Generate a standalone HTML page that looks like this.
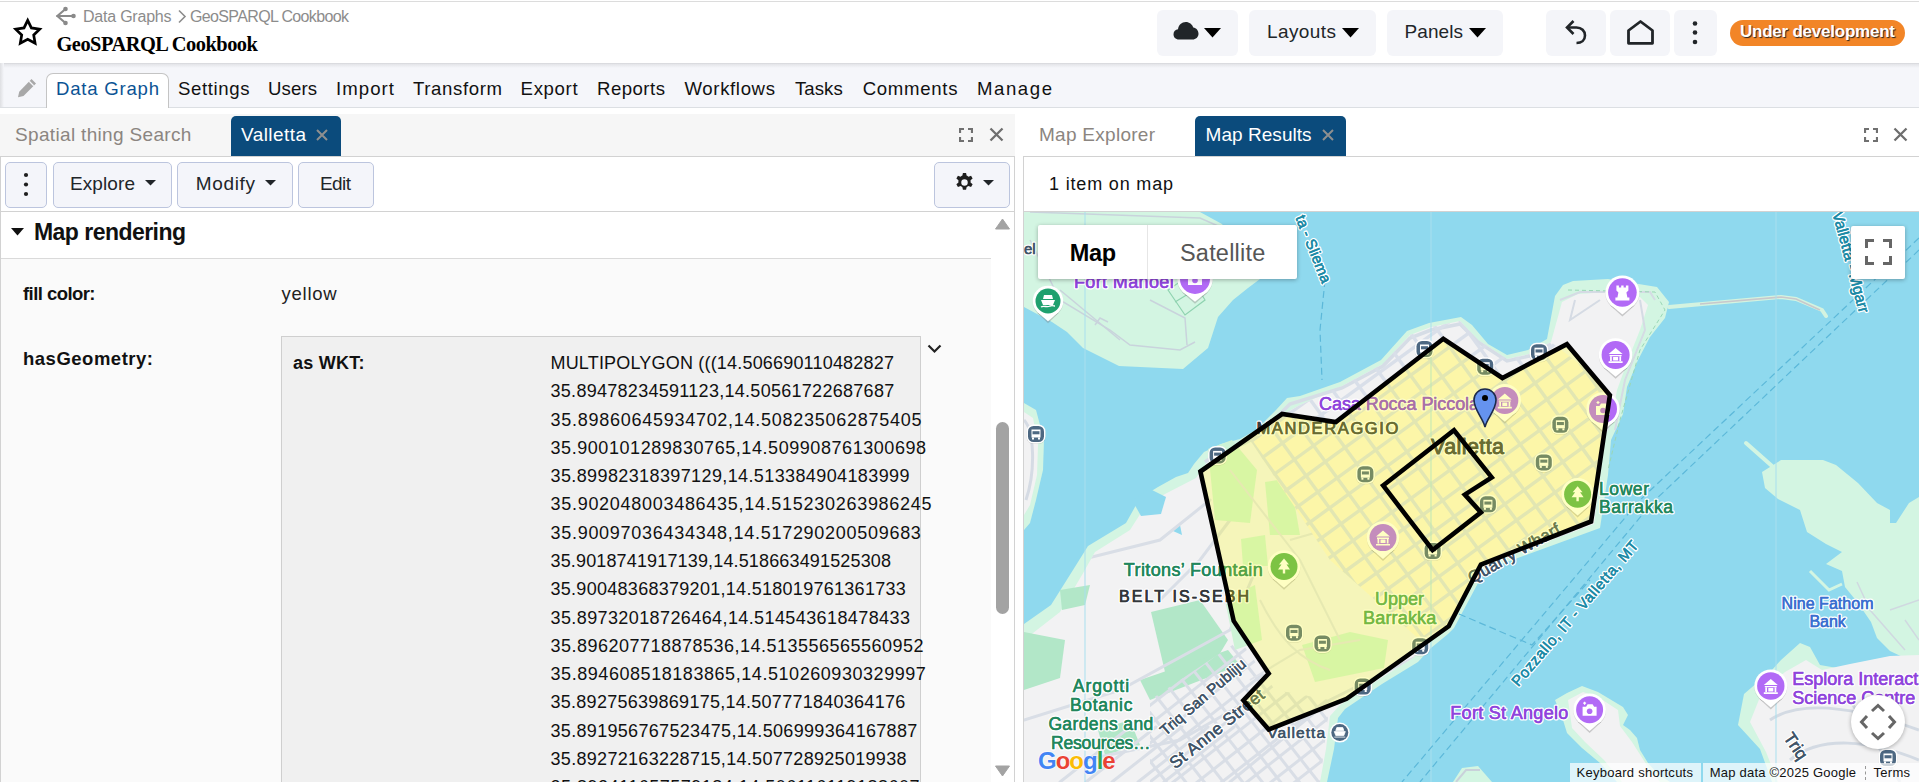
<!DOCTYPE html>
<html><head><meta charset="utf-8">
<style>
*{margin:0;padding:0;box-sizing:border-box}
html,body{width:1919px;height:782px;overflow:hidden;background:#fff;font-family:"Liberation Sans",sans-serif;color:#1a1a1a}
.a{position:absolute}
.t{position:absolute;white-space:nowrap;line-height:1}
.btn{position:absolute;background:#f4f5f9;border-radius:6px}
.tb{position:absolute;background:#f4f5fa;border:1px solid #bcc5de;border-radius:5px}
</style></head><body>
<div class="a" style="left:0;top:1px;width:1919px;height:1px;background:#dcdcdc"></div><div class="a" style="left:0;top:63px;width:1919px;height:44px;background:#f5f6fa"></div><div class="a" style="left:0;top:63px;width:1919px;height:1px;background:#dadbdf"></div><div class="a" style="left:0;top:64px;width:1919px;height:4px;background:linear-gradient(#e3e4e8,#f5f6fa)"></div><div class="a" style="left:0;top:63px;width:4px;height:44px;background:linear-gradient(90deg,#dedfe2,#f5f6fa)"></div><div class="a" style="left:0;top:107px;width:1919px;height:1px;background:#dcdfe3"></div><svg class="a" style="left:0;top:0" width="60" height="60"><path d="M27.70 20.40 L31.40 27.90 L39.68 29.11 L33.69 34.95 L35.11 43.19 L27.70 39.30 L20.29 43.19 L21.71 34.95 L15.72 29.11 L24.00 27.90 Z" fill="none" stroke="#000" stroke-width="2.7" stroke-linejoin="miter"/></svg><svg class="a" style="left:55px;top:6px" width="22" height="20" viewBox="0 0 22 20"><g fill="#8a8a8a" stroke="#8a8a8a"><circle cx="10.5" cy="3" r="2.3" stroke="none"/><circle cx="10.5" cy="17" r="2.3" stroke="none"/><circle cx="18.5" cy="10" r="2.3" stroke="none"/><path d="M2 10 L18 10 M2.3 10 L10.5 3 M2.3 10 L10.5 17" stroke-width="2.2" fill="none" stroke-linecap="round"/></g></svg><div class="t" style="left:83.0px;top:9.00px;font-size:16px;letter-spacing:-0.221px;color:#8c8c8c;">Data Graphs</div>
<svg class="a" style="left:177px;top:9px" width="10" height="15" viewBox="0 0 10 15"><path d="M2 1.5 L8 7.5 L2 13.5" fill="none" stroke="#8c8c8c" stroke-width="1.6"/></svg><div class="t" style="left:190.0px;top:9.00px;font-size:16px;letter-spacing:-0.639px;color:#8c8c8c;">GeoSPARQL Cookbook</div>
<div class="t" style="left:56.5px;top:34.00px;font-size:20.4px;letter-spacing:-0.494px;color:#000;font-weight:bold;font-family:'Liberation Serif',serif;">GeoSPARQL Cookbook</div>
<div class="btn" style="left:1157px;top:10px;width:81px;height:46px"></div><svg class="a" style="left:1173px;top:21px" width="26" height="19" viewBox="0 0 26 19"><path d="M6 18.5 C2.5 18.5 0.5 16 0.5 13.2 C0.5 10.5 2.5 8.5 5 8.2 C5.5 4 8.8 1 12.8 1 C16.3 1 19.3 3.3 20.3 6.6 C23.3 7 25.5 9.6 25.5 12.7 C25.5 16 22.8 18.5 19.6 18.5 Z" fill="#212529"/></svg><svg class="a" style="left:1204px;top:28px" width="17" height="10" viewBox="0 0 17 10"><path d="M0 0 L17 0 L8.5 9.5 Z" fill="#000"/></svg><div class="btn" style="left:1249px;top:10px;width:127px;height:46px"></div><div class="t" style="left:1267.0px;top:22.00px;font-size:19px;letter-spacing:0.409px;color:#212529;">Layouts</div>
<svg class="a" style="left:1342px;top:28px" width="17" height="10" viewBox="0 0 17 10"><path d="M0 0 L17 0 L8.5 9.5 Z" fill="#000"/></svg><div class="btn" style="left:1387px;top:10px;width:116px;height:46px"></div><div class="t" style="left:1404.5px;top:22.00px;font-size:19px;letter-spacing:0.081px;color:#212529;">Panels</div>
<svg class="a" style="left:1469px;top:28px" width="17" height="10" viewBox="0 0 17 10"><path d="M0 0 L17 0 L8.5 9.5 Z" fill="#000"/></svg><div class="btn" style="left:1546px;top:10px;width:60px;height:46px"></div><div class="btn" style="left:1610px;top:10px;width:60px;height:46px"></div><div class="btn" style="left:1674px;top:10px;width:43px;height:46px"></div><svg class="a" style="left:1563px;top:18px" width="26" height="27" viewBox="0 0 26 27"><path d="M5 9.5 L13.5 9.5 C18.5 9.5 22 13 22 17.5 C22 22 18.5 25 13.5 25" fill="none" stroke="#212529" stroke-width="2.6"/><path d="M10.5 3 L4 9.5 L10.5 16" fill="none" stroke="#212529" stroke-width="2.6"/></svg><svg class="a" style="left:1626px;top:19px" width="29" height="27" viewBox="0 0 29 27"><path d="M2.5 11.5 L14.5 2.5 L26.5 11.5 L26.5 24.3 L2.5 24.3 Z" fill="none" stroke="#212529" stroke-width="2.8" stroke-linejoin="round"/></svg><svg class="a" style="left:1690px;top:19px" width="10" height="27" viewBox="0 0 10 27"><circle cx="5" cy="4.5" r="2.3" fill="#212529"/><circle cx="5" cy="13.5" r="2.3" fill="#212529"/><circle cx="5" cy="23" r="2.3" fill="#212529"/></svg><div class="a" style="left:1730px;top:20px;width:175px;height:26px;background:#f28527;border-radius:13px"></div><div class="t" style="left:1740.0px;top:23.00px;font-size:17px;letter-spacing:-0.231px;color:#fff;font-weight:bold;text-shadow:1px 1px 1px #222;">Under development</div>
<svg class="a" style="left:16px;top:77px" width="22" height="22" viewBox="0 0 22 22"><path d="M15.5 2 L20 6.5 L7.5 19 L2 20.2 L3.2 14.7 Z" fill="#a8a8a8"/><path d="M13.2 4.3 L17.7 8.8" stroke="#f5f6fa" stroke-width="1.3"/></svg><div class="a" style="left:46px;top:73px;width:123px;height:35px;background:#fff;border:1px solid #c4c4c4;border-bottom:none;border-radius:7px 7px 0 0"></div><div class="t" style="left:56.0px;top:80.00px;font-size:18.6px;letter-spacing:0.761px;color:#0b5394;">Data Graph</div>
<div class="t" style="left:178.0px;top:80.00px;font-size:18.6px;letter-spacing:0.613px;color:#111;">Settings</div>
<div class="t" style="left:268.0px;top:80.00px;font-size:18.6px;letter-spacing:0.107px;color:#111;">Users</div>
<div class="t" style="left:336.0px;top:80.00px;font-size:18.6px;letter-spacing:1.057px;color:#111;">Import</div>
<div class="t" style="left:413.0px;top:80.00px;font-size:18.6px;letter-spacing:0.618px;color:#111;">Transform</div>
<div class="t" style="left:520.6px;top:80.00px;font-size:18.6px;letter-spacing:0.648px;color:#111;">Export</div>
<div class="t" style="left:597.0px;top:80.00px;font-size:18.6px;letter-spacing:0.478px;color:#111;">Reports</div>
<div class="t" style="left:684.5px;top:80.00px;font-size:18.6px;letter-spacing:0.633px;color:#111;">Workflows</div>
<div class="t" style="left:795.0px;top:80.00px;font-size:18.6px;letter-spacing:0.039px;color:#111;">Tasks</div>
<div class="t" style="left:862.7px;top:80.00px;font-size:18.6px;letter-spacing:0.697px;color:#111;">Comments</div>
<div class="t" style="left:977.0px;top:80.00px;font-size:18.6px;letter-spacing:1.556px;color:#111;">Manage</div>
<div class="a" style="left:0;top:114px;width:1015px;height:42px;background:#f6f6f6"></div><div class="a" style="left:0;top:156px;width:1015px;height:1px;background:#d2d2d2"></div><div class="a" style="left:0;top:157px;width:1px;height:625px;background:#d2d2d2"></div><div class="a" style="left:1014px;top:157px;width:1px;height:625px;background:#d2d2d2"></div><div class="a" style="left:1px;top:211px;width:1013px;height:1px;background:#d2d2d2"></div><div class="a" style="left:1px;top:258px;width:990px;height:1px;background:#dadada"></div><div class="a" style="left:1px;top:259px;width:990px;height:523px;background:#fafafa"></div><div class="t" style="left:15.0px;top:125.00px;font-size:19px;letter-spacing:0.334px;color:#8b8580;">Spatial thing Search</div>
<div class="a" style="left:231px;top:116px;width:110px;height:40px;background:#0b4b7c;border-radius:5px 5px 0 0"></div><div class="t" style="left:241.0px;top:125.00px;font-size:19px;letter-spacing:0.434px;color:#fff;">Valletta</div>
<svg class="a" style="left:315.5px;top:128.5px" width="12" height="12" viewBox="0 0 12 12"><path d="M1 1 L11 11 M11 1 L1 11" stroke="#8f8f8f" stroke-width="2"/></svg><svg class="a" style="left:959px;top:128px" width="14" height="14" viewBox="0 0 14 14"><path d="M1 5 V1 H5 M9 1 H13 V5 M13 9 V13 H9 M5 13 H1 V9" fill="none" stroke="#707070" stroke-width="2.2"/></svg><svg class="a" style="left:989px;top:127px" width="15" height="15" viewBox="0 0 15 15"><path d="M1.5 1.5 L13.5 13.5 M13.5 1.5 L1.5 13.5" stroke="#6e6e6e" stroke-width="2.3"/></svg><div class="tb" style="left:5px;top:162px;width:42px;height:46px"></div><div class="tb" style="left:53px;top:162px;width:119px;height:46px"></div><div class="tb" style="left:177px;top:162px;width:116px;height:46px"></div><div class="tb" style="left:298px;top:162px;width:76px;height:46px"></div><div class="tb" style="left:934px;top:162px;width:76px;height:46px"></div><svg class="a" style="left:21px;top:171px" width="10" height="27" viewBox="0 0 10 27"><circle cx="5" cy="4" r="2.1" fill="#1e1e1e"/><circle cx="5" cy="13.5" r="2.1" fill="#1e1e1e"/><circle cx="5" cy="23" r="2.1" fill="#1e1e1e"/></svg><div class="t" style="left:70.0px;top:174.00px;font-size:19px;letter-spacing:0.096px;color:#212529;">Explore</div>
<svg class="a" style="left:144.5px;top:180px" width="11" height="6" viewBox="0 0 11 6"><path d="M0 0 L11 0 L5.5 5.5 Z" fill="#212529"/></svg><div class="t" style="left:195.7px;top:174.00px;font-size:19px;letter-spacing:0.668px;color:#212529;">Modify</div>
<svg class="a" style="left:264.5px;top:180px" width="11" height="6" viewBox="0 0 11 6"><path d="M0 0 L11 0 L5.5 5.5 Z" fill="#212529"/></svg><div class="t" style="left:320.0px;top:174.00px;font-size:19px;letter-spacing:-0.580px;color:#212529;">Edit</div>
<svg class="a" style="left:954px;top:172px" width="21" height="21" viewBox="0 0 24 24"><path fill="#1e1e1e" fill-rule="evenodd" d="M10.2 1h3.6l.6 3.1a8 8 0 0 1 2.1 1.2l3-1 1.8 3.1-2.4 2.1a8 8 0 0 1 0 2.4l2.4 2.1-1.8 3.1-3-1a8 8 0 0 1-2.1 1.2l-.6 3.1h-3.6l-.6-3.1a8 8 0 0 1-2.1-1.2l-3 1-1.8-3.1 2.4-2.1a8 8 0 0 1 0-2.4L2.7 7.4l1.8-3.1 3 1a8 8 0 0 1 2.1-1.2zM12 8.3a3.7 3.7 0 1 0 0 7.4 3.7 3.7 0 0 0 0-7.4z"/></svg><svg class="a" style="left:982.5px;top:180px" width="11" height="6" viewBox="0 0 11 6"><path d="M0 0 L11 0 L5.5 5.5 Z" fill="#212529"/></svg><svg class="a" style="left:11px;top:228px" width="14" height="8" viewBox="0 0 14 8"><path d="M0 0 L13 0 L6.5 7.5 Z" fill="#111"/></svg><div class="t" style="left:34.0px;top:221.00px;font-size:23px;letter-spacing:-0.539px;color:#111;font-weight:bold;">Map rendering</div>
<div class="t" style="left:23.0px;top:285.00px;font-size:18.5px;letter-spacing:-0.561px;color:#111;font-weight:bold;">fill color:</div>
<div class="t" style="left:281.5px;top:285.00px;font-size:18.5px;letter-spacing:0.758px;color:#222;">yellow</div>
<div class="t" style="left:23.0px;top:350.00px;font-size:18.5px;letter-spacing:0.508px;color:#111;font-weight:bold;">hasGeometry:</div>
<div class="a" style="left:281px;top:336px;width:640px;height:450px;background:#f0f0f0;border:1px solid #cfcfcf"></div><div class="t" style="left:293.0px;top:354.00px;font-size:18px;letter-spacing:0.249px;color:#111;font-weight:bold;">as WKT:</div>
<div class="t" style="left:550.5px;top:354.00px;font-size:18px;letter-spacing:0.188px;color:#111;">MULTIPOLYGON (((14.506690110482827</div>
<div class="t" style="left:550.5px;top:382.00px;font-size:18px;letter-spacing:0.285px;color:#111;">35.89478234591123,14.50561722687687</div>
<div class="t" style="left:550.5px;top:411.00px;font-size:18px;letter-spacing:0.732px;color:#111;">35.89860645934702,14.508235062875405</div>
<div class="t" style="left:550.5px;top:439.00px;font-size:18px;letter-spacing:0.562px;color:#111;">35.900101289830765,14.509908761300698</div>
<div class="t" style="left:550.5px;top:467.00px;font-size:18px;letter-spacing:0.389px;color:#111;">35.89982318397129,14.513384904183999</div>
<div class="t" style="left:550.5px;top:495.00px;font-size:18px;letter-spacing:0.712px;color:#111;">35.902048003486435,14.515230263986245</div>
<div class="t" style="left:550.5px;top:524.00px;font-size:18px;letter-spacing:0.715px;color:#111;">35.90097036434348,14.517290200509683</div>
<div class="t" style="left:550.5px;top:552.00px;font-size:18px;letter-spacing:0.151px;color:#111;">35.9018741917139,14.518663491525308</div>
<div class="t" style="left:550.5px;top:580.00px;font-size:18px;letter-spacing:0.284px;color:#111;">35.90048368379201,14.518019761361733</div>
<div class="t" style="left:550.5px;top:609.00px;font-size:18px;letter-spacing:0.401px;color:#111;">35.89732018726464,14.514543618478433</div>
<div class="t" style="left:550.5px;top:637.00px;font-size:18px;letter-spacing:0.489px;color:#111;">35.896207718878536,14.513556565560952</div>
<div class="t" style="left:550.5px;top:665.00px;font-size:18px;letter-spacing:0.556px;color:#111;">35.894608518183865,14.510260930329997</div>
<div class="t" style="left:550.5px;top:693.00px;font-size:18px;letter-spacing:0.267px;color:#111;">35.89275639869175,14.507771840364176</div>
<div class="t" style="left:550.5px;top:722.00px;font-size:18px;letter-spacing:0.317px;color:#111;">35.891956767523475,14.506999364167887</div>
<div class="t" style="left:550.5px;top:750.00px;font-size:18px;letter-spacing:0.304px;color:#111;">35.89272163228715,14.507728925019938</div>
<div class="t" style="left:550.5px;top:778.00px;font-size:18px;letter-spacing:0.490px;color:#111;">35.892411657579184,14.506116119188607</div>
<svg class="a" style="left:927px;top:344px" width="15" height="10" viewBox="0 0 15 10"><path d="M1.5 1.5 L7.5 7.5 L13.5 1.5" fill="none" stroke="#222" stroke-width="2.2"/></svg><div class="a" style="left:991px;top:212px;width:23px;height:570px;background:#fff"></div><svg class="a" style="left:995px;top:218px" width="15" height="12" viewBox="0 0 15 12"><path d="M0.5 11 L7.5 1 L14.5 11 Z" fill="#a3a3a3" stroke="#a3a3a3" stroke-linejoin="round"/></svg><svg class="a" style="left:995px;top:765px" width="15" height="12" viewBox="0 0 15 12"><path d="M0.5 1 L7.5 11 L14.5 1 Z" fill="#a3a3a3" stroke="#a3a3a3" stroke-linejoin="round"/></svg><div class="a" style="left:996px;top:422px;width:13px;height:192px;background:#a3a3a3;border-radius:7px"></div><div class="t" style="left:1039.0px;top:125.00px;font-size:19px;letter-spacing:0.273px;color:#8b8580;">Map Explorer</div>
<div class="a" style="left:1195px;top:116px;width:151px;height:40px;background:#0b4b7c;border-radius:5px 5px 0 0"></div><div class="t" style="left:1205.6px;top:125.00px;font-size:19px;letter-spacing:0.040px;color:#fff;">Map Results</div>
<svg class="a" style="left:1321.5px;top:128.5px" width="12" height="12" viewBox="0 0 12 12"><path d="M1 1 L11 11 M11 1 L1 11" stroke="#8f8f8f" stroke-width="2"/></svg><svg class="a" style="left:1864px;top:128px" width="14" height="14" viewBox="0 0 14 14"><path d="M1 5 V1 H5 M9 1 H13 V5 M13 9 V13 H9 M5 13 H1 V9" fill="none" stroke="#707070" stroke-width="2.2"/></svg><svg class="a" style="left:1893px;top:127px" width="15" height="15" viewBox="0 0 15 15"><path d="M1.5 1.5 L13.5 13.5 M13.5 1.5 L1.5 13.5" stroke="#6e6e6e" stroke-width="2.3"/></svg><div class="a" style="left:1023px;top:156px;width:896px;height:1px;background:#d2d2d2"></div><div class="a" style="left:1023px;top:157px;width:1px;height:625px;background:#d2d2d2"></div><div class="a" style="left:1024px;top:211px;width:895px;height:1px;background:#d2d2d2"></div><div class="t" style="left:1049.0px;top:175.00px;font-size:18px;letter-spacing:0.828px;color:#111;">1 item on map</div>
<svg class="a" style="left:1024px;top:212px" width="895" height="570" viewBox="1024 212 895 570"><rect x="1024" y="212" width="895" height="570" fill="#8fd9ee"/><polygon points="1024,212 1200,212 1222,224 1260,279 1248,288 1233,300 1218,317 1208,348 1183,369 1119,366 1083,348 1067,332 1052,322 1024,307" fill="#d3f5e2"/><g fill="none" stroke="#c9d3dc" stroke-width="1.5"><path d="M1030 240 L1060 300 L1110 330 L1130 345 L1180 350 L1195 342"/><path d="M1060 290 L1120 340"/><path d="M1095 325 L1100 318 L1108 322"/><path d="M1150 300 L1185 318 L1187 345"/><path d="M1030 212 L1200 218 L1250 240"/></g><g fill="none" stroke="#8fd3b0" stroke-width="1.2"><path d="M1168 290 L1190 275 L1205 300 L1185 315 Z M1175 302 L1198 288"/></g><polygon points="1024,403 1036,410 1044,440 1043,470 1036,500 1030,523 1024,530" fill="#d3f5e2"/><polygon points="1024,412 1033,418 1038,445 1037,475 1030,505 1024,515" fill="#f2f2f3"/><path d="M1024 420 C1034 430 1036 470 1026 500" fill="none" stroke="#d5dbe4" stroke-width="3"/><polygon points="1024,782 1024,624 1051,605 1073,570 1088,546 1126,523 1140,498 1158,487 1176,477 1188,473 1194,464 1204,452 1221,444 1240,439 1256,430 1276,410 1287,398 1300,396 1340,382 1381,360 1407,331 1429,323 1461,317 1472,325 1488,344 1507,355 1528,350 1547,339 1555,296 1563,285 1573,281 1608,279 1657,287 1669,302 1665,318 1650,337 1638,360 1627,387 1623,414 1611,440 1608,475 1600,528 1485,570 1454,628 1448,634 1431,648 1418,662 1382,684 1345,709 1338,718 1334,749 1327,782" fill="#d3f5e2"/><polygon points="1024,782 1024,640 1060,612 1082,575 1095,552 1130,530 1146,505 1165,494 1196,478 1210,458 1245,445 1262,436 1282,415 1300,405 1342,386 1383,364 1410,335 1431,327 1460,321 1478,340 1507,359 1529,354 1551,342 1562,302 1578,294 1610,292 1640,297 1648,305 1640,330 1628,360 1617,390 1612,418 1602,440 1600,475 1594,524 1483,566 1450,624 1444,630 1427,644 1413,658 1378,680 1340,705 1330,716 1326,749 1320,782" fill="#f2f2f3"/><path d="M1205 462 L1222 450 L1242 444 L1258 436 L1278 416 L1290 404 L1342 388 L1383 366 L1410 338 L1431 330 L1460 324 L1478 342 L1507 361 L1529 356 L1551 344" fill="none" stroke="#d6dde6" stroke-width="3.5"/><polygon points="1132,500 1150,489 1166,497 1161,514 1141,516" fill="#8fd9ee"/><polygon points="1173,531 1180,525 1182,535" fill="#8fd9ee"/><polygon points="1024,632 1065,640 1060,678 1024,690" fill="#b2e7c8"/><polygon points="1151,612 1200,600 1228,640 1210,670 1165,672" fill="#b2e7c8"/><polygon points="1140,680 1228,650 1240,665 1150,700" fill="#b2e7c8"/><polygon points="1060,590 1090,585 1085,605 1062,610" fill="#b2e7c8"/><polygon points="1098,730 1130,720 1140,745 1105,755" fill="#b2e7c8"/><clipPath id="fc"><polygon points="1024,782 1024,640 1060,612 1082,575 1095,552 1130,530 1146,505 1165,494 1196,478 1210,458 1245,445 1262,436 1282,415 1300,405 1342,386 1383,364 1410,335 1431,327 1460,321 1478,340 1507,359 1529,354 1551,342 1562,302 1578,294 1610,292 1640,297 1648,305 1640,330 1628,360 1617,390 1612,418 1602,440 1600,475 1594,524 1483,566 1450,624 1444,630 1427,644 1413,658 1378,680 1340,705 1330,716 1326,749 1320,782"/></clipPath><g stroke="#d9dee6" stroke-width="3" fill="none" stroke-linecap="round" clip-path="url(#fc)"><clipPath id="flc"><polygon points="1150,782 1150,700 1240,640 1275,690 1330,700 1320,782"/></clipPath></g><g stroke="#d9dee6" stroke-width="3" fill="none" clip-path="url(#flc)"><path d="M1048 728 L1284 543"/><path d="M1057 740 L1294 555"/><path d="M1066 751 L1303 567"/><path d="M1076 763 L1312 579"/><path d="M1085 775 L1321 590"/><path d="M1094 787 L1330 602"/><path d="M1103 799 L1340 614"/><path d="M1113 811 L1349 626"/><path d="M1122 822 L1358 638"/><path d="M1131 834 L1367 649"/><path d="M1140 846 L1377 661"/><path d="M1150 858 L1386 673"/><path d="M1159 870 L1395 685"/><path d="M1168 881 L1404 697"/><path d="M1177 893 L1414 709"/><path d="M1186 905 L1423 720"/><path d="M1196 917 L1432 732"/><path d="M1029 704 L1214 941"/><path d="M1041 695 L1226 931"/><path d="M1053 686 L1238 922"/><path d="M1065 676 L1250 913"/><path d="M1077 667 L1261 904"/><path d="M1089 658 L1273 894"/><path d="M1100 649 L1285 885"/><path d="M1112 640 L1297 876"/><path d="M1124 630 L1309 867"/><path d="M1136 621 L1321 857"/><path d="M1148 612 L1332 848"/><path d="M1159 603 L1344 839"/><path d="M1171 593 L1356 830"/><path d="M1183 584 L1368 820"/><path d="M1195 575 L1380 811"/><path d="M1207 566 L1391 802"/><path d="M1219 556 L1403 793"/><path d="M1230 547 L1415 784"/><path d="M1242 538 L1427 774"/><path d="M1254 529 L1439 765"/><path d="M1266 519 L1451 756"/></g><g stroke="#d9dee6" stroke-width="3" fill="none" stroke-linecap="round" clip-path="url(#fc)"><path d="M1060 782 L1130 727"/><path d="M1086 782 L1156 727"/><path d="M1112 782 L1182 727"/><path d="M1138 782 L1208 727"/><path d="M1164 782 L1234 727"/><path d="M1024 720 L1120 690 L1230 630 L1260 560"/><path d="M1080 560 L1160 540 L1210 500"/><path d="M1160 600 L1200 560 L1230 520"/><path d="M1230 782 L1330 700 L1440 645"/><path d="M1085 760 L1180 740 L1250 700"/></g><polygon points="1208,449 1232,440 1257,470 1250,523 1215,520" fill="#cdf3d6"/><polygon points="1241,539 1265,535 1268,566 1243,566" fill="#cdf3d6"/><polygon points="1265,482 1290,478 1300,535 1270,535" fill="#cdf3d6"/><polygon points="1302,645 1350,632 1388,640 1384,668 1315,682" fill="#cdf3d6"/><polygon points="1225,600 1255,585 1262,640 1235,650" fill="#cdf3d6"/><g stroke="#dfe2e8" stroke-width="2" fill="none"><path d="M1230 470 L1300 560 L1340 640"/><path d="M1260 600 C1280 640 1300 660 1330 670"/><path d="M1290 540 L1360 520"/><path d="M1250 680 L1300 650 L1360 640"/></g><clipPath id="vc"><polygon points="1250,440 1282,415 1300,405 1342,386 1383,364 1410,335 1431,327 1460,321 1478,340 1507,359 1529,354 1551,342 1600,380 1614,418 1603,440 1600,475 1594,524 1483,566 1450,624 1420,640 1330,560"/></clipPath><g clip-path="url(#vc)"><polygon points="1200.4,471.5 1282.1,414 1335.8,422.1 1443.3,338.8 1502.4,378 1566.9,344.2 1609.9,395.2 1591.1,521.5 1480.9,564.5 1448.7,626.3 1346.6,698.8 1268.7,729.5 1243.4,700.4 1268.7,673.6 1233.7,620.9" fill="#fcf4dc"/></g><g stroke="#d9dfe9" stroke-width="3.4" fill="none" clip-path="url(#vc)"><path d="M1194 458 L1518 223"/><path d="M1206 474 L1530 239"/><path d="M1218 490 L1541 255"/><path d="M1229 507 L1553 272"/><path d="M1241 523 L1565 288"/><path d="M1253 539 L1577 304"/><path d="M1265 555 L1588 320"/><path d="M1276 571 L1600 336"/><path d="M1288 588 L1612 352"/><path d="M1300 604 L1624 369"/><path d="M1312 620 L1635 385"/><path d="M1323 636 L1647 401"/><path d="M1335 652 L1659 417"/><path d="M1347 668 L1671 433"/><path d="M1359 685 L1682 450"/><path d="M1370 701 L1694 466"/><path d="M1382 717 L1706 482"/><path d="M1168 490 L1344 732"/><path d="M1187 476 L1363 718"/><path d="M1207 462 L1383 704"/><path d="M1226 447 L1402 690"/><path d="M1245 433 L1422 676"/><path d="M1265 419 L1441 662"/><path d="M1284 405 L1461 648"/><path d="M1304 391 L1480 634"/><path d="M1323 377 L1499 620"/><path d="M1342 363 L1519 605"/><path d="M1362 349 L1538 591"/><path d="M1381 335 L1558 577"/><path d="M1401 320 L1577 563"/><path d="M1420 306 L1596 549"/><path d="M1439 292 L1616 535"/><path d="M1459 278 L1635 521"/><path d="M1478 264 L1655 507"/><path d="M1498 250 L1674 493"/><path d="M1517 236 L1693 478"/><path d="M1537 222 L1713 464"/><path d="M1556 208 L1732 450"/></g><path d="M1560 300 L1580 292 L1650 292 L1655 300 M1575 300 L1570 320 L1600 300 M1640 300 L1645 330 L1625 380 L1615 430" fill="none" stroke="#d5dbe4" stroke-width="2"/><path d="M1568 290 L1655 292 L1665 310 L1640 350 L1620 420 L1608 470" fill="none" stroke="#9ad7b5" stroke-width="1" stroke-dasharray="4 3"/><polygon points="1762,472 1781,460 1823,460 1836,465 1858,483 1877,503 1890,510 1890,523 1896,523 1909,503 1919,497 1919,660 1909,660 1890,651 1877,638 1871,622 1858,603 1845,587 1842,571 1826,564 1842,552 1826,544 1807,532 1800,510 1778,499 1765,488" fill="#d3f5e2"/><path d="M1746 443 L1772 466" stroke="#d3f5e2" stroke-width="4" stroke-linecap="round"/><path d="M1810 571 L1829 590 L1842 584" stroke="#d3f5e2" stroke-width="3" fill="none"/><path d="M1857 582 L1870 610 L1905 650 M1890 610 L1919 600 M1905 620 L1919 640" stroke="#d0d8e0" stroke-width="1.5" fill="none"/><polygon points="1738,725 1744,694 1772,670 1781,660 1800,643 1810,647 1820,665 1860,672 1890,660 1919,660 1919,782 1772,782 1760,749" fill="#d3f5e2"/><polygon points="1750,722 1762,692 1785,672 1806,660 1822,670 1850,664 1890,656 1919,655 1919,782 1778,782 1766,752" fill="#f2f2f3"/><g stroke="#d3dae3" stroke-width="3" fill="none"><path d="M1770 720 C1800 700 1850 705 1919 730"/><path d="M1790 760 C1820 735 1870 740 1919 760"/><path d="M1850 700 L1900 782"/></g><polygon points="1555,700 1567,693 1582,686 1598,692 1623,707 1628,715 1623,725 1630,730 1637,738 1640,750 1648,763 1657,773 1670,782 1617,782 1600,763 1582,748 1567,733 1563,720" fill="#d3f5e2"/><polygon points="1568,700 1583,692 1598,697 1618,710 1620,726 1632,742 1650,770 1660,782 1622,782 1604,760 1585,742 1572,728" fill="#f2f2f3"/><polygon points="1453,782 1462,768 1478,766 1492,782" fill="#d3f5e2"/><path d="M1456 782 L1466 770 L1480 770" stroke="#c9d1da" stroke-width="2" fill="none"/><path d="M1669 307 L1781 297 L1796 299 L1822 310 L1826 316" fill="none" stroke="#d4f3e0" stroke-width="4" stroke-linecap="round"/><path d="M1700 304 L1781 297 L1796 299 L1820 310" fill="none" stroke="#c8c8cc" stroke-width="1.6"/><g stroke="#a9dfee" stroke-width="1"><path d="M1085 212 V782"/><path d="M1431 212 V782"/><path d="M1776 212 V782"/></g><g fill="none" stroke="#5cb8d9" stroke-width="1.2" stroke-dasharray="7 4"><path d="M1919 238 L1640 500 L1402 782"/><path d="M1919 250 L1652 503 L1420 782"/><path d="M1459 614 L1532 645 L1590 580"/><path d="M1325 280 L1320 330 L1322 380"/></g><g transform="translate(1036 434)"><rect x="-9.5" y="-9" width="19" height="19" rx="7" fill="#000" opacity="0.15"/><rect x="-9.5" y="-9.5" width="19" height="19" rx="7" fill="#fff"/><rect x="-8" y="-8" width="16" height="16" rx="5.5" fill="#4d6882"/><path d="M-4.5 -4.5 H4.5 V3.5 H-4.5 Z" fill="#fff"/><path d="M-3.5 -2.8 H3.5 V0.3 H-3.5 Z" fill="#4d6882"/><rect x="-4" y="3.5" width="2" height="2" fill="#fff"/><rect x="2" y="3.5" width="2" height="2" fill="#fff"/></g><g transform="translate(1217.6 455.4)"><rect x="-9.5" y="-9" width="19" height="19" rx="7" fill="#000" opacity="0.15"/><rect x="-9.5" y="-9.5" width="19" height="19" rx="7" fill="#fff"/><rect x="-8" y="-8" width="16" height="16" rx="5.5" fill="#4d6882"/><path d="M-4.5 -4.5 H4.5 V3.5 H-4.5 Z" fill="#fff"/><path d="M-3.5 -2.8 H3.5 V0.3 H-3.5 Z" fill="#4d6882"/><rect x="-4" y="3.5" width="2" height="2" fill="#fff"/><rect x="2" y="3.5" width="2" height="2" fill="#fff"/></g><g transform="translate(1424.5 349)"><rect x="-9.5" y="-9" width="19" height="19" rx="7" fill="#000" opacity="0.15"/><rect x="-9.5" y="-9.5" width="19" height="19" rx="7" fill="#fff"/><rect x="-8" y="-8" width="16" height="16" rx="5.5" fill="#4d6882"/><path d="M-4.5 -4.5 H4.5 V3.5 H-4.5 Z" fill="#fff"/><path d="M-3.5 -2.8 H3.5 V0.3 H-3.5 Z" fill="#4d6882"/><rect x="-4" y="3.5" width="2" height="2" fill="#fff"/><rect x="2" y="3.5" width="2" height="2" fill="#fff"/></g><g transform="translate(1485.2 366.7)"><rect x="-9.5" y="-9" width="19" height="19" rx="7" fill="#000" opacity="0.15"/><rect x="-9.5" y="-9.5" width="19" height="19" rx="7" fill="#fff"/><rect x="-8" y="-8" width="16" height="16" rx="5.5" fill="#4d6882"/><path d="M-4.5 -4.5 H4.5 V3.5 H-4.5 Z" fill="#fff"/><path d="M-3.5 -2.8 H3.5 V0.3 H-3.5 Z" fill="#4d6882"/><rect x="-4" y="3.5" width="2" height="2" fill="#fff"/><rect x="2" y="3.5" width="2" height="2" fill="#fff"/></g><g transform="translate(1539 352.2)"><rect x="-9.5" y="-9" width="19" height="19" rx="7" fill="#000" opacity="0.15"/><rect x="-9.5" y="-9.5" width="19" height="19" rx="7" fill="#fff"/><rect x="-8" y="-8" width="16" height="16" rx="5.5" fill="#4d6882"/><path d="M-4.5 -4.5 H4.5 V3.5 H-4.5 Z" fill="#fff"/><path d="M-3.5 -2.8 H3.5 V0.3 H-3.5 Z" fill="#4d6882"/><rect x="-4" y="3.5" width="2" height="2" fill="#fff"/><rect x="2" y="3.5" width="2" height="2" fill="#fff"/></g><g transform="translate(1365.4 474.2)"><rect x="-9.5" y="-9" width="19" height="19" rx="7" fill="#000" opacity="0.15"/><rect x="-9.5" y="-9.5" width="19" height="19" rx="7" fill="#fff"/><rect x="-8" y="-8" width="16" height="16" rx="5.5" fill="#4d6882"/><path d="M-4.5 -4.5 H4.5 V3.5 H-4.5 Z" fill="#fff"/><path d="M-3.5 -2.8 H3.5 V0.3 H-3.5 Z" fill="#4d6882"/><rect x="-4" y="3.5" width="2" height="2" fill="#fff"/><rect x="2" y="3.5" width="2" height="2" fill="#fff"/></g><g transform="translate(1560.4 424.8)"><rect x="-9.5" y="-9" width="19" height="19" rx="7" fill="#000" opacity="0.15"/><rect x="-9.5" y="-9.5" width="19" height="19" rx="7" fill="#fff"/><rect x="-8" y="-8" width="16" height="16" rx="5.5" fill="#4d6882"/><path d="M-4.5 -4.5 H4.5 V3.5 H-4.5 Z" fill="#fff"/><path d="M-3.5 -2.8 H3.5 V0.3 H-3.5 Z" fill="#4d6882"/><rect x="-4" y="3.5" width="2" height="2" fill="#fff"/><rect x="2" y="3.5" width="2" height="2" fill="#fff"/></g><g transform="translate(1543.8 462.4)"><rect x="-9.5" y="-9" width="19" height="19" rx="7" fill="#000" opacity="0.15"/><rect x="-9.5" y="-9.5" width="19" height="19" rx="7" fill="#fff"/><rect x="-8" y="-8" width="16" height="16" rx="5.5" fill="#4d6882"/><path d="M-4.5 -4.5 H4.5 V3.5 H-4.5 Z" fill="#fff"/><path d="M-3.5 -2.8 H3.5 V0.3 H-3.5 Z" fill="#4d6882"/><rect x="-4" y="3.5" width="2" height="2" fill="#fff"/><rect x="2" y="3.5" width="2" height="2" fill="#fff"/></g><g transform="translate(1487.9 504.3)"><rect x="-9.5" y="-9" width="19" height="19" rx="7" fill="#000" opacity="0.15"/><rect x="-9.5" y="-9.5" width="19" height="19" rx="7" fill="#fff"/><rect x="-8" y="-8" width="16" height="16" rx="5.5" fill="#4d6882"/><path d="M-4.5 -4.5 H4.5 V3.5 H-4.5 Z" fill="#fff"/><path d="M-3.5 -2.8 H3.5 V0.3 H-3.5 Z" fill="#4d6882"/><rect x="-4" y="3.5" width="2" height="2" fill="#fff"/><rect x="2" y="3.5" width="2" height="2" fill="#fff"/></g><g transform="translate(1432.6 551)"><rect x="-9.5" y="-9" width="19" height="19" rx="7" fill="#000" opacity="0.15"/><rect x="-9.5" y="-9.5" width="19" height="19" rx="7" fill="#fff"/><rect x="-8" y="-8" width="16" height="16" rx="5.5" fill="#4d6882"/><path d="M-4.5 -4.5 H4.5 V3.5 H-4.5 Z" fill="#fff"/><path d="M-3.5 -2.8 H3.5 V0.3 H-3.5 Z" fill="#4d6882"/><rect x="-4" y="3.5" width="2" height="2" fill="#fff"/><rect x="2" y="3.5" width="2" height="2" fill="#fff"/></g><g transform="translate(1294 632.7)"><rect x="-9.5" y="-9" width="19" height="19" rx="7" fill="#000" opacity="0.15"/><rect x="-9.5" y="-9.5" width="19" height="19" rx="7" fill="#fff"/><rect x="-8" y="-8" width="16" height="16" rx="5.5" fill="#4d6882"/><path d="M-4.5 -4.5 H4.5 V3.5 H-4.5 Z" fill="#fff"/><path d="M-3.5 -2.8 H3.5 V0.3 H-3.5 Z" fill="#4d6882"/><rect x="-4" y="3.5" width="2" height="2" fill="#fff"/><rect x="2" y="3.5" width="2" height="2" fill="#fff"/></g><g transform="translate(1322.4 643.5)"><rect x="-9.5" y="-9" width="19" height="19" rx="7" fill="#000" opacity="0.15"/><rect x="-9.5" y="-9.5" width="19" height="19" rx="7" fill="#fff"/><rect x="-8" y="-8" width="16" height="16" rx="5.5" fill="#4d6882"/><path d="M-4.5 -4.5 H4.5 V3.5 H-4.5 Z" fill="#fff"/><path d="M-3.5 -2.8 H3.5 V0.3 H-3.5 Z" fill="#4d6882"/><rect x="-4" y="3.5" width="2" height="2" fill="#fff"/><rect x="2" y="3.5" width="2" height="2" fill="#fff"/></g><g transform="translate(1420.2 646.2)"><rect x="-9.5" y="-9" width="19" height="19" rx="7" fill="#000" opacity="0.15"/><rect x="-9.5" y="-9.5" width="19" height="19" rx="7" fill="#fff"/><rect x="-8" y="-8" width="16" height="16" rx="5.5" fill="#4d6882"/><path d="M-4.5 -4.5 H4.5 V3.5 H-4.5 Z" fill="#fff"/><path d="M-3.5 -2.8 H3.5 V0.3 H-3.5 Z" fill="#4d6882"/><rect x="-4" y="3.5" width="2" height="2" fill="#fff"/><rect x="2" y="3.5" width="2" height="2" fill="#fff"/></g><g transform="translate(1362.7 686.5)"><rect x="-9.5" y="-9" width="19" height="19" rx="7" fill="#000" opacity="0.15"/><rect x="-9.5" y="-9.5" width="19" height="19" rx="7" fill="#fff"/><rect x="-8" y="-8" width="16" height="16" rx="5.5" fill="#4d6882"/><path d="M-4.5 -4.5 H4.5 V3.5 H-4.5 Z" fill="#fff"/><path d="M-3.5 -2.8 H3.5 V0.3 H-3.5 Z" fill="#4d6882"/><rect x="-4" y="3.5" width="2" height="2" fill="#fff"/><rect x="2" y="3.5" width="2" height="2" fill="#fff"/></g><g transform="translate(1888 758)"><rect x="-9.5" y="-9" width="19" height="19" rx="7" fill="#000" opacity="0.15"/><rect x="-9.5" y="-9.5" width="19" height="19" rx="7" fill="#fff"/><rect x="-8" y="-8" width="16" height="16" rx="5.5" fill="#4d6882"/><path d="M-4.5 -4.5 H4.5 V3.5 H-4.5 Z" fill="#fff"/><path d="M-3.5 -2.8 H3.5 V0.3 H-3.5 Z" fill="#4d6882"/><rect x="-4" y="3.5" width="2" height="2" fill="#fff"/><rect x="2" y="3.5" width="2" height="2" fill="#fff"/></g><text x="1074" y="288" font-size="18" fill="#8f44dc" letter-spacing="0.37" stroke="#fff" stroke-width="3" stroke-linejoin="round" paint-order="stroke" text-anchor="start" >Fort Manoel</text><text x="1074" y="288" font-size="18" fill="#8f44dc" letter-spacing="0.37" stroke="#8f44dc" stroke-width="0.45" text-anchor="start" >Fort Manoel</text><text x="1024" y="254" font-size="15" fill="#3f5468" stroke="#fff" stroke-width="3" stroke-linejoin="round" paint-order="stroke" text-anchor="start" >el</text><text x="1024" y="254" font-size="15" fill="#3f5468" stroke="#3f5468" stroke-width="0.45" text-anchor="start" >el</text><text x="1319" y="410" font-size="18" fill="#8f44dc" letter-spacing="-0.06" stroke="#fff" stroke-width="3" stroke-linejoin="round" paint-order="stroke" text-anchor="start" >Casa Rocca Piccola</text><text x="1319" y="410" font-size="18" fill="#8f44dc" letter-spacing="-0.06" stroke="#8f44dc" stroke-width="0.45" text-anchor="start" >Casa Rocca Piccola</text><text x="1256.4" y="433.7" font-size="16.5" fill="#3a3e42" letter-spacing="1.64" stroke="#fff" stroke-width="3" stroke-linejoin="round" paint-order="stroke" text-anchor="start" >MANDERAGGIO</text><text x="1256.4" y="433.7" font-size="16.5" fill="#3a3e42" letter-spacing="1.64" stroke="#3a3e42" stroke-width="0.7" text-anchor="start" >MANDERAGGIO</text><text x="1431" y="454.3" font-size="21.5" fill="#3c4043" letter-spacing="0.41" stroke="#fff" stroke-width="3" stroke-linejoin="round" paint-order="stroke" text-anchor="start" >Valletta</text><text x="1431" y="454.3" font-size="21.5" fill="#3c4043" letter-spacing="0.41" stroke="#3c4043" stroke-width="0.8" text-anchor="start" >Valletta</text><text x="1599" y="495" font-size="17.5" fill="#21875c" letter-spacing="0.58" stroke="#fff" stroke-width="3" stroke-linejoin="round" paint-order="stroke" text-anchor="start" >Lower</text><text x="1599" y="495" font-size="17.5" fill="#21875c" letter-spacing="0.58" stroke="#21875c" stroke-width="0.45" text-anchor="start" >Lower</text><text x="1599" y="513.4" font-size="17.5" fill="#21875c" letter-spacing="0.57" stroke="#fff" stroke-width="3" stroke-linejoin="round" paint-order="stroke" text-anchor="start" >Barrakka</text><text x="1599" y="513.4" font-size="17.5" fill="#21875c" letter-spacing="0.57" stroke="#21875c" stroke-width="0.45" text-anchor="start" >Barrakka</text><text x="1123.8" y="575.9" font-size="18" fill="#21875c" letter-spacing="0.39" stroke="#fff" stroke-width="3" stroke-linejoin="round" paint-order="stroke" text-anchor="start" >Tritons’ Fountain</text><text x="1123.8" y="575.9" font-size="18" fill="#21875c" letter-spacing="0.39" stroke="#21875c" stroke-width="0.45" text-anchor="start" >Tritons’ Fountain</text><text x="1119" y="602" font-size="16" fill="#33373b" letter-spacing="2.09" stroke="#fff" stroke-width="3" stroke-linejoin="round" paint-order="stroke" text-anchor="start" >BELT IS-SEBH</text><text x="1119" y="602" font-size="16" fill="#33373b" letter-spacing="2.09" stroke="#33373b" stroke-width="0.6" text-anchor="start" >BELT IS-SEBH</text><text x="1375" y="605.4" font-size="18" fill="#4aa35a" letter-spacing="-0.01" stroke="#fff" stroke-width="3" stroke-linejoin="round" paint-order="stroke" text-anchor="start" >Upper</text><text x="1375" y="605.4" font-size="18" fill="#4aa35a" letter-spacing="-0.01" stroke="#4aa35a" stroke-width="0.45" text-anchor="start" >Upper</text><text x="1363" y="623.9" font-size="18" fill="#4aa35a" letter-spacing="0.18" stroke="#fff" stroke-width="3" stroke-linejoin="round" paint-order="stroke" text-anchor="start" >Barrakka</text><text x="1363" y="623.9" font-size="18" fill="#4aa35a" letter-spacing="0.18" stroke="#4aa35a" stroke-width="0.45" text-anchor="start" >Barrakka</text><text x="1072.8" y="692" font-size="17.5" fill="#21875c" letter-spacing="0.94" stroke="#fff" stroke-width="3" stroke-linejoin="round" paint-order="stroke" text-anchor="start" >Argotti</text><text x="1072.8" y="692" font-size="17.5" fill="#21875c" letter-spacing="0.94" stroke="#21875c" stroke-width="0.45" text-anchor="start" >Argotti</text><text x="1070" y="711" font-size="17.5" fill="#21875c" letter-spacing="0.67" stroke="#fff" stroke-width="3" stroke-linejoin="round" paint-order="stroke" text-anchor="start" >Botanic</text><text x="1070" y="711" font-size="17.5" fill="#21875c" letter-spacing="0.67" stroke="#21875c" stroke-width="0.45" text-anchor="start" >Botanic</text><text x="1048.4" y="730" font-size="17.5" fill="#21875c" letter-spacing="0.37" stroke="#fff" stroke-width="3" stroke-linejoin="round" paint-order="stroke" text-anchor="start" >Gardens and</text><text x="1048.4" y="730" font-size="17.5" fill="#21875c" letter-spacing="0.37" stroke="#21875c" stroke-width="0.45" text-anchor="start" >Gardens and</text><text x="1051" y="749" font-size="17.5" fill="#21875c" letter-spacing="-0.17" stroke="#fff" stroke-width="3" stroke-linejoin="round" paint-order="stroke" text-anchor="start" >Resources…</text><text x="1051" y="749" font-size="17.5" fill="#21875c" letter-spacing="-0.17" stroke="#21875c" stroke-width="0.45" text-anchor="start" >Resources…</text><text x="0" y="5.2" font-size="15" fill="#3f5468" letter-spacing="0.18" stroke="#fff" stroke-width="3" stroke-linejoin="round" paint-order="stroke" text-anchor="middle" transform="translate(1203 697) rotate(-40.9)">Triq San Publiju</text><text x="0" y="5.2" font-size="15" fill="#3f5468" letter-spacing="0.18" stroke="#3f5468" stroke-width="0.45" text-anchor="middle" transform="translate(1203 697) rotate(-40.9)">Triq San Publiju</text><text x="0" y="5.9" font-size="17" fill="#3f5468" letter-spacing="0.49" stroke="#fff" stroke-width="3" stroke-linejoin="round" paint-order="stroke" text-anchor="middle" transform="translate(1217 728.5) rotate(-38.8)">St Anne Street</text><text x="0" y="5.9" font-size="17" fill="#3f5468" letter-spacing="0.49" stroke="#3f5468" stroke-width="0.45" text-anchor="middle" transform="translate(1217 728.5) rotate(-38.8)">St Anne Street</text><text x="1267.2" y="738" font-size="15.5" fill="#3f5468" letter-spacing="1.04" stroke="#fff" stroke-width="3" stroke-linejoin="round" paint-order="stroke" text-anchor="start" >Valletta</text><text x="1267.2" y="738" font-size="15.5" fill="#3f5468" letter-spacing="1.04" stroke="#3f5468" stroke-width="0.45" text-anchor="start" >Valletta</text><text x="0" y="5.8" font-size="16.5" fill="#3f5468" letter-spacing="0.36" stroke="#fff" stroke-width="3" stroke-linejoin="round" paint-order="stroke" text-anchor="middle" transform="translate(1514 553) rotate(-29.9)">Quarry Wharf</text><text x="0" y="5.8" font-size="16.5" fill="#3f5468" letter-spacing="0.36" stroke="#3f5468" stroke-width="0.45" text-anchor="middle" transform="translate(1514 553) rotate(-29.9)">Quarry Wharf</text><text x="0" y="5.2" font-size="15" fill="#1b8aa6" letter-spacing="0.60" stroke="#fff" stroke-width="3" stroke-linejoin="round" paint-order="stroke" text-anchor="middle" transform="translate(1575 613) rotate(-49.4)">Pozzallo, IT - Valletta, MT</text><text x="0" y="5.2" font-size="15" fill="#1b8aa6" letter-spacing="0.60" stroke="#1b8aa6" stroke-width="0.45" text-anchor="middle" transform="translate(1575 613) rotate(-49.4)">Pozzallo, IT - Valletta, MT</text><text x="1450.3" y="718.7" font-size="18" fill="#8f44dc" letter-spacing="0.30" stroke="#fff" stroke-width="3" stroke-linejoin="round" paint-order="stroke" text-anchor="start" >Fort St Angelo</text><text x="1450.3" y="718.7" font-size="18" fill="#8f44dc" letter-spacing="0.30" stroke="#8f44dc" stroke-width="0.45" text-anchor="start" >Fort St Angelo</text><text x="1827.6" y="609" font-size="16" fill="#3a6fd0" letter-spacing="0.04" stroke="#fff" stroke-width="3" stroke-linejoin="round" paint-order="stroke" text-anchor="middle" >Nine Fathom</text><text x="1827.6" y="609" font-size="16" fill="#3a6fd0" letter-spacing="0.04" stroke="#3a6fd0" stroke-width="0.45" text-anchor="middle" >Nine Fathom</text><text x="1827.6" y="626.5" font-size="16" fill="#3a6fd0" letter-spacing="-0.02" stroke="#fff" stroke-width="3" stroke-linejoin="round" paint-order="stroke" text-anchor="middle" >Bank</text><text x="1827.6" y="626.5" font-size="16" fill="#3a6fd0" letter-spacing="-0.02" stroke="#3a6fd0" stroke-width="0.45" text-anchor="middle" >Bank</text><text x="1792.3" y="685.3" font-size="18" fill="#8f44dc" stroke="#fff" stroke-width="3" stroke-linejoin="round" paint-order="stroke" text-anchor="start" >Esplora Interactive</text><text x="1792.3" y="685.3" font-size="18" fill="#8f44dc" stroke="#8f44dc" stroke-width="0.45" text-anchor="start" >Esplora Interactive</text><text x="1792.3" y="703.9" font-size="18" fill="#8f44dc" stroke="#fff" stroke-width="3" stroke-linejoin="round" paint-order="stroke" text-anchor="start" >Science Centre</text><text x="1792.3" y="703.9" font-size="18" fill="#8f44dc" stroke="#8f44dc" stroke-width="0.45" text-anchor="start" >Science Centre</text><text x="0" y="5.2" font-size="15" fill="#1b8aa6" letter-spacing="0.03" stroke="#fff" stroke-width="3" stroke-linejoin="round" paint-order="stroke" text-anchor="middle" transform="translate(1313.5 249) rotate(68.2)">ta - Sliema</text><text x="0" y="5.2" font-size="15" fill="#1b8aa6" letter-spacing="0.03" stroke="#1b8aa6" stroke-width="0.45" text-anchor="middle" transform="translate(1313.5 249) rotate(68.2)">ta - Sliema</text><text x="0" y="5.4" font-size="15.5" fill="#1b8aa6" letter-spacing="-0.05" stroke="#fff" stroke-width="3" stroke-linejoin="round" paint-order="stroke" text-anchor="middle" transform="translate(1851 262) rotate(75)">Valletta - Mgarr</text><text x="0" y="5.4" font-size="15.5" fill="#1b8aa6" letter-spacing="-0.05" stroke="#1b8aa6" stroke-width="0.45" text-anchor="middle" transform="translate(1851 262) rotate(75)">Valletta - Mgarr</text><text x="0" y="5.9" font-size="17" fill="#3f5468" stroke="#fff" stroke-width="3" stroke-linejoin="round" paint-order="stroke" text-anchor="middle" transform="translate(1796 746) rotate(56)">Triq</text><text x="0" y="5.9" font-size="17" fill="#3f5468" stroke="#3f5468" stroke-width="0.45" text-anchor="middle" transform="translate(1796 746) rotate(56)">Triq</text><g transform="translate(1195 279)"><path d="M-12.8 12.5 L0 23.8 L12.8 12.5 Z" fill="#777" opacity="0.35" transform="translate(0 1)"/><circle cx="0" cy="1" r="17.8" fill="#000" opacity="0.12"/><path d="M-12.8 12.5 L0 22.8 L12.8 12.5 Z" fill="#fff"/><circle cx="0" cy="0" r="17.8" fill="#fff"/><circle cx="0" cy="0" r="15" fill="#b26af6"/><path d="M-7 -3 H-3.5 L-2 -5.5 H3 L4.5 -3 H7 V6 H-7 Z" fill="#fff"/><circle cx="0" cy="1.5" r="2.8" fill="#b26af6"/><path d="M-5 -8 V-5 M-6.5 -6.5 H-3.5" stroke="#fff" stroke-width="1.2"/></g><g transform="translate(1622.4 292.5)"><path d="M-12.3 12.0 L0 23.1 L12.3 12.0 Z" fill="#777" opacity="0.35" transform="translate(0 1)"/><circle cx="0" cy="1" r="17.1" fill="#000" opacity="0.12"/><path d="M-12.3 12.0 L0 22.1 L12.3 12.0 Z" fill="#fff"/><circle cx="0" cy="0" r="17.1" fill="#fff"/><circle cx="0" cy="0" r="14.3" fill="#b26af6"/><path d="M-6 -7 H-3.5 V-5 H-1.2 V-7 H1.2 V-5 H3.5 V-7 H6 V-2 L4 0 L5 5 H7 V8 H-7 V5 H-5 L-4 0 L-6 -2 Z" fill="#fff"/></g><g transform="translate(1615.6 355)"><path d="M-12.1 11.8 L0 22.8 L12.1 11.8 Z" fill="#777" opacity="0.35" transform="translate(0 1)"/><circle cx="0" cy="1" r="16.8" fill="#000" opacity="0.12"/><path d="M-12.1 11.8 L0 21.8 L12.1 11.8 Z" fill="#fff"/><circle cx="0" cy="0" r="16.8" fill="#fff"/><circle cx="0" cy="0" r="14" fill="#b26af6"/><path d="M-7 -1 L0 -7 L7 -1 Z M-6 0 H6 V1.3 H-6 Z M-5.5 1.5 H-3.8 V6 H-5.5 Z M3.8 1.5 H5.5 V6 H3.8 Z M-7 6.3 H7 V8 H-7 Z M-2.5 2 H2.5 V5.5 H-2.5 Z" fill="#fff"/></g><g transform="translate(1603 409)"><path d="M-12.1 11.8 L0 22.8 L12.1 11.8 Z" fill="#777" opacity="0.35" transform="translate(0 1)"/><circle cx="0" cy="1" r="16.8" fill="#000" opacity="0.12"/><path d="M-12.1 11.8 L0 21.8 L12.1 11.8 Z" fill="#fff"/><circle cx="0" cy="0" r="16.8" fill="#fff"/><circle cx="0" cy="0" r="14" fill="#b26af6"/><path d="M-7 -3 H-3.5 L-2 -5.5 H3 L4.5 -3 H7 V6 H-7 Z" fill="#fff"/><circle cx="0" cy="1.5" r="2.8" fill="#b26af6"/><path d="M-5 -8 V-5 M-6.5 -6.5 H-3.5" stroke="#fff" stroke-width="1.2"/></g><g transform="translate(1504.8 400.4)"><path d="M-11.7 11.4 L0 22.3 L11.7 11.4 Z" fill="#777" opacity="0.35" transform="translate(0 1)"/><circle cx="0" cy="1" r="16.3" fill="#000" opacity="0.12"/><path d="M-11.7 11.4 L0 21.3 L11.7 11.4 Z" fill="#fff"/><circle cx="0" cy="0" r="16.3" fill="#fff"/><circle cx="0" cy="0" r="13.5" fill="#b26af6"/><path d="M-7 -1 L0 -7 L7 -1 Z M-6 0 H6 V1.3 H-6 Z M-5.5 1.5 H-3.8 V6 H-5.5 Z M3.8 1.5 H5.5 V6 H3.8 Z M-7 6.3 H7 V8 H-7 Z M-2.5 2 H2.5 V5.5 H-2.5 Z" fill="#fff"/></g><g transform="translate(1383 537.6)"><path d="M-11.7 11.4 L0 22.3 L11.7 11.4 Z" fill="#777" opacity="0.35" transform="translate(0 1)"/><circle cx="0" cy="1" r="16.3" fill="#000" opacity="0.12"/><path d="M-11.7 11.4 L0 21.3 L11.7 11.4 Z" fill="#fff"/><circle cx="0" cy="0" r="16.3" fill="#fff"/><circle cx="0" cy="0" r="13.5" fill="#b26af6"/><path d="M-7 -1 L0 -7 L7 -1 Z M-6 0 H6 V1.3 H-6 Z M-5.5 1.5 H-3.8 V6 H-5.5 Z M3.8 1.5 H5.5 V6 H3.8 Z M-7 6.3 H7 V8 H-7 Z M-2.5 2 H2.5 V5.5 H-2.5 Z" fill="#fff"/></g><g transform="translate(1589.6 709.7)"><path d="M-11.7 11.4 L0 22.3 L11.7 11.4 Z" fill="#777" opacity="0.35" transform="translate(0 1)"/><circle cx="0" cy="1" r="16.3" fill="#000" opacity="0.12"/><path d="M-11.7 11.4 L0 21.3 L11.7 11.4 Z" fill="#fff"/><circle cx="0" cy="0" r="16.3" fill="#fff"/><circle cx="0" cy="0" r="13.5" fill="#b26af6"/><path d="M-7 -3 H-3.5 L-2 -5.5 H3 L4.5 -3 H7 V6 H-7 Z" fill="#fff"/><circle cx="0" cy="1.5" r="2.8" fill="#b26af6"/><path d="M-5 -8 V-5 M-6.5 -6.5 H-3.5" stroke="#fff" stroke-width="1.2"/></g><g transform="translate(1770.8 686)"><path d="M-11.9 11.5 L0 22.5 L11.9 11.5 Z" fill="#777" opacity="0.35" transform="translate(0 1)"/><circle cx="0" cy="1" r="16.5" fill="#000" opacity="0.12"/><path d="M-11.9 11.5 L0 21.5 L11.9 11.5 Z" fill="#fff"/><circle cx="0" cy="0" r="16.5" fill="#fff"/><circle cx="0" cy="0" r="13.7" fill="#b26af6"/><path d="M-7 -1 L0 -7 L7 -1 Z M-6 0 H6 V1.3 H-6 Z M-5.5 1.5 H-3.8 V6 H-5.5 Z M3.8 1.5 H5.5 V6 H3.8 Z M-7 6.3 H7 V8 H-7 Z M-2.5 2 H2.5 V5.5 H-2.5 Z" fill="#fff"/></g><g transform="translate(1577.6 494.2)"><path d="M-11.7 11.4 L0 22.3 L11.7 11.4 Z" fill="#777" opacity="0.35" transform="translate(0 1)"/><circle cx="0" cy="1" r="16.3" fill="#000" opacity="0.12"/><path d="M-11.7 11.4 L0 21.3 L11.7 11.4 Z" fill="#fff"/><circle cx="0" cy="0" r="16.3" fill="#fff"/><circle cx="0" cy="0" r="13.5" fill="#55b15a"/><path d="M0 -8 L5 -2 H2.5 L6 3 H1.2 V7 H-1.2 V3 H-6 L-2.5 -2 H-5 Z" fill="#fff"/></g><g transform="translate(1284 566.5)"><path d="M-11.7 11.4 L0 22.3 L11.7 11.4 Z" fill="#777" opacity="0.35" transform="translate(0 1)"/><circle cx="0" cy="1" r="16.3" fill="#000" opacity="0.12"/><path d="M-11.7 11.4 L0 21.3 L11.7 11.4 Z" fill="#fff"/><circle cx="0" cy="0" r="16.3" fill="#fff"/><circle cx="0" cy="0" r="13.5" fill="#55b15a"/><path d="M0 -8 L5 -2 H2.5 L6 3 H1.2 V7 H-1.2 V3 H-6 L-2.5 -2 H-5 Z" fill="#fff"/></g><g transform="translate(1048 301)"><path d="M-11.0 10.7 L0 21.3 L11.0 10.7 Z" fill="#777" opacity="0.35" transform="translate(0 1)"/><circle cx="0" cy="1" r="15.3" fill="#000" opacity="0.12"/><path d="M-11.0 10.7 L0 20.3 L11.0 10.7 Z" fill="#fff"/><circle cx="0" cy="0" r="15.3" fill="#fff"/><circle cx="0" cy="0" r="12.5" fill="#1fa06e"/><path d="M-4 -6 H4 L5 -2 H-5 Z M-7 -1 H7 L5 4 H-5 Z" fill="#fff"/><path d="M-7 6 C-4 4 -1 7 2 5 C4 4 6 5 7 5" stroke="#fff" stroke-width="1.4" fill="none"/></g><g transform="translate(1339.8 732.6)"><circle r="10" fill="#fff"/><circle r="8.5" fill="#4d6882"/><path d="M-3 -5 H3 L4 -2 H-4 Z M-5.5 -1 H5.5 L4 3 H-4 Z M-5.5 4.5 H5.5" fill="#fff" stroke="#fff" stroke-width="0.8"/></g><polygon points="1200.4,471.5 1282.1,414 1335.8,422.1 1443.3,338.8 1502.4,378 1566.9,344.2 1609.9,395.2 1591.1,521.5 1480.9,564.5 1448.7,626.3 1346.6,698.8 1268.7,729.5 1243.4,700.4 1268.7,673.6 1233.7,620.9" fill="#ffff00" fill-opacity="0.235" stroke="none"/><polygon points="1200.4,471.5 1282.1,414 1335.8,422.1 1443.3,338.8 1502.4,378 1566.9,344.2 1609.9,395.2 1591.1,521.5 1480.9,564.5 1448.7,626.3 1346.6,698.8 1268.7,729.5 1243.4,700.4 1268.7,673.6 1233.7,620.9" fill="none" stroke="#000" stroke-width="4.6" stroke-linejoin="miter"/><polygon points="1383.1,485.5 1454,430.2 1491.7,477.4 1464.8,494.6 1480.9,512.4 1432.6,550" fill="none" stroke="#000" stroke-width="4.6" stroke-linejoin="miter"/><g transform="translate(1485 398)"><path d="M0 29 C-2 20 -11 12 -11 2 A11 11 0 0 1 11 2 C11 12 2 20 0 29 Z" fill="#6593ef" stroke="#1c2a4a" stroke-width="1.6"/><circle cx="0" cy="0" r="3" fill="#000"/></g></svg><div class="a" style="left:1038px;top:225px;width:259px;height:54px;background:#fff;border-radius:2px;box-shadow:0 1px 4px rgba(0,0,0,0.3)"></div><div class="a" style="left:1147px;top:225px;width:1px;height:54px;background:#e6e6e6"></div><div class="t" style="left:1069.7px;top:242px;font-size:23.5px;font-weight:bold;color:#000;letter-spacing:-0.3px">Map</div><div class="t" style="left:1180px;top:242px;font-size:23.5px;color:#565656;letter-spacing:0.2px">Satellite</div><div class="a" style="left:1851px;top:226px;width:54px;height:53px;background:#fff;border-radius:2px;box-shadow:0 1px 4px rgba(0,0,0,0.3)"></div><svg class="a" style="left:1864px;top:238px" width="29" height="28" viewBox="0 0 29 28"><path d="M2.5 10 V2.5 H10 M19 2.5 H26.5 V10 M26.5 18 V25.5 H19 M10 25.5 H2.5 V18" fill="none" stroke="#666" stroke-width="3"/></svg><div class="a" style="left:1851px;top:695px;width:54px;height:54px;background:#fff;border-radius:50%;box-shadow:0 1px 4px rgba(0,0,0,0.3)"></div><svg class="a" style="left:1858px;top:702px" width="40" height="40" viewBox="0 0 40 40"><path d="M14 9 L20 3.5 L26 9 M14 31 L20 36.5 L26 31 M9 14 L3.5 20 L9 26 M31 14 L36.5 20 L31 26" fill="none" stroke="#666" stroke-width="3"/></svg><div class="t" style="left:1038px;top:749px;font-size:24px;font-weight:bold;letter-spacing:-1px;text-shadow:0 0 2px #fff,0 0 2px #fff"><span style="color:#4285f4">G</span><span style="color:#ea4335">o</span><span style="color:#fbbc05">o</span><span style="color:#4285f4">g</span><span style="color:#34a853">l</span><span style="color:#ea4335">e</span></div><div class="a" style="left:1570px;top:763px;width:131px;height:19px;background:rgba(255,255,255,0.7)"></div><div class="a" style="left:1703px;top:763px;width:216px;height:19px;background:rgba(255,255,255,0.7)"></div><div class="t" style="left:1576.6px;top:766.00px;font-size:13px;letter-spacing:0.258px;color:#111;">Keyboard shortcuts</div>
<div class="t" style="left:1709.7px;top:766.00px;font-size:13px;letter-spacing:0.223px;color:#111;">Map data ©2025 Google</div>
<div class="a" style="left:1865px;top:766px;width:1px;height:14px;border-left:1.5px dashed #999"></div><div class="t" style="left:1873.6px;top:766.00px;font-size:13px;letter-spacing:0.253px;color:#111;">Terms</div>
</body></html>
